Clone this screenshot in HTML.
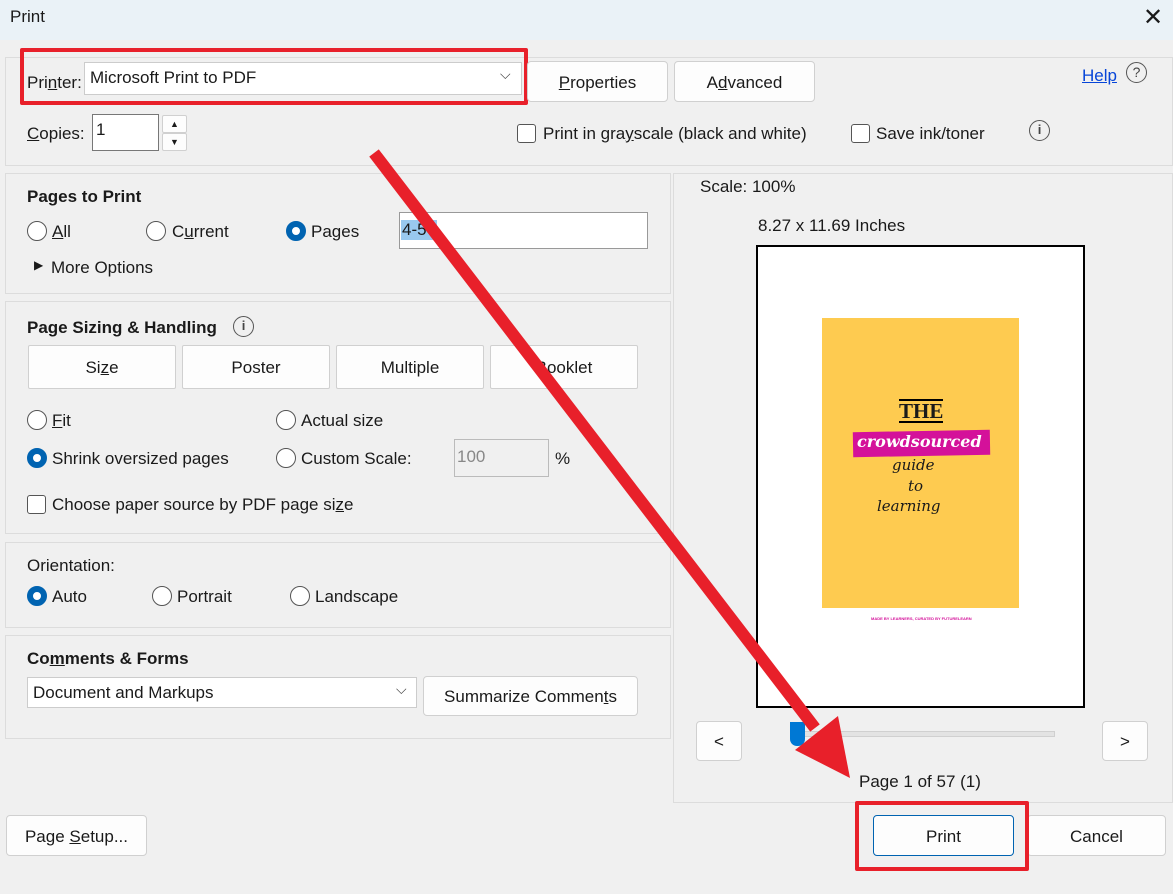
<!DOCTYPE html>
<html><head><style>
*{box-sizing:border-box;margin:0;padding:0}
body{width:1173px;height:894px;background:#f0f0f0;font-family:"Liberation Sans",sans-serif;font-size:17px;color:#1a1a1a;position:relative;overflow:hidden}
.a{position:absolute;white-space:nowrap}
.panel{position:absolute;border:1px solid #dcdcdc;background:#f0f0f0}
.btn{position:absolute;background:#fdfdfd;border:1px solid #d0d0d0;border-radius:4px;text-align:center}
.rad{position:absolute;width:20px;height:20px;border-radius:50%;border:1.5px solid #555;background:#fff}
.rad.on{border:6px solid #0063b1}
.chk{position:absolute;width:19px;height:19px;border:1.5px solid #555;border-radius:3px;background:#fff}
.inp{position:absolute;background:#fff;border:1px solid #aaa}
b{font-weight:bold}
u{text-decoration:underline}
</style></head><body>
<div class="a" style="left:0;top:0;width:1173px;height:40px;background:#eaf2f7"></div>
<div class="a" style="left:10px;top:7px;font-size:17px">Print</div>
<div class="a" style="left:1143px;top:3px;font-size:24px;font-weight:300">✕</div>

<div class="panel" style="left:5px;top:57px;width:1168px;height:109px"></div>
<div class="a" style="left:27px;top:73px">Pri<u>n</u>ter:</div>
<div class="inp" style="left:84px;top:62px;width:438px;height:33px;border-color:#ccc"></div>
<div class="a" style="left:90px;top:68px">Microsoft Print to PDF</div>
<div class="a" style="left:500px;top:66px;font-size:14px;color:#444">⌵</div>
<div class="a" style="left:20px;top:48px;width:508px;height:57px;border:4px solid #e8202a;border-radius:2px"></div>
<div class="btn" style="left:527px;top:61px;width:141px;height:41px;line-height:41px"><u>P</u>roperties</div>
<div class="btn" style="left:674px;top:61px;width:141px;height:41px;line-height:41px">A<u>d</u>vanced</div>
<div class="a" style="left:1082px;top:66px;color:#0645d8;text-decoration:underline">Help</div>
<div class="a" style="left:1126px;top:62px;width:21px;height:21px;border:1.5px solid #555;border-radius:50%;text-align:center;font-size:14px;line-height:18px;color:#444">?</div>

<div class="a" style="left:27px;top:124px"><u>C</u>opies:</div>
<div class="inp" style="left:92px;top:114px;width:67px;height:37px;border-color:#777"></div>
<div class="a" style="left:96px;top:120px">1</div>
<div class="btn" style="left:162px;top:115px;width:25px;height:18px;border-radius:2px;font-size:9px;line-height:16px">▲</div>
<div class="btn" style="left:162px;top:133px;width:25px;height:18px;border-radius:2px;font-size:9px;line-height:16px">▼</div>
<div class="chk" style="left:517px;top:124px"></div>
<div class="a" style="left:543px;top:124px">Print in gra<u>y</u>scale (black and white)</div>
<div class="chk" style="left:851px;top:124px"></div>
<div class="a" style="left:876px;top:124px">Save ink/toner</div>
<div class="a" style="left:1029px;top:120px;width:21px;height:21px;border:1.5px solid #555;border-radius:50%;text-align:center;font-size:13px;line-height:18px;color:#444;font-weight:bold">i</div>

<div class="panel" style="left:5px;top:173px;width:666px;height:121px"></div>
<div class="a" style="left:27px;top:187px"><b>Pages to Print</b></div>
<div class="rad" style="left:27px;top:221px"></div><div class="a" style="left:52px;top:222px"><u>A</u>ll</div>
<div class="rad" style="left:146px;top:221px"></div><div class="a" style="left:172px;top:222px">C<u>u</u>rrent</div>
<div class="rad on" style="left:286px;top:221px"></div><div class="a" style="left:311px;top:222px">Pa<u>g</u>es</div>
<div class="inp" style="left:399px;top:212px;width:249px;height:37px;border-color:#999"></div>
<div class="a" style="left:401px;top:220px;background:#99c9ef;padding:0 1px">4-57</div>
<div class="a" style="left:34px;top:258px;font-size:12px">▶</div>
<div class="a" style="left:51px;top:258px">More Options</div>

<div class="panel" style="left:5px;top:301px;width:666px;height:233px"></div>
<div class="a" style="left:27px;top:318px"><b>Page Sizing &amp; Handling</b></div>
<div class="a" style="left:233px;top:316px;width:21px;height:21px;border:1.5px solid #555;border-radius:50%;text-align:center;font-size:13px;line-height:18px;color:#444;font-weight:bold">i</div>
<div class="btn" style="left:28px;top:345px;width:148px;height:44px;line-height:44px;border-radius:2px">Si<u>z</u>e</div>
<div class="btn" style="left:182px;top:345px;width:148px;height:44px;line-height:44px;border-radius:2px">Poster</div>
<div class="btn" style="left:336px;top:345px;width:148px;height:44px;line-height:44px;border-radius:2px">Multiple</div>
<div class="btn" style="left:490px;top:345px;width:148px;height:44px;line-height:44px;border-radius:2px">Booklet</div>
<div class="rad" style="left:27px;top:410px"></div><div class="a" style="left:52px;top:411px"><u>F</u>it</div>
<div class="rad" style="left:276px;top:410px"></div><div class="a" style="left:301px;top:411px">Actual size</div>
<div class="rad on" style="left:27px;top:448px"></div><div class="a" style="left:52px;top:449px">Shrink oversized pages</div>
<div class="rad" style="left:276px;top:448px"></div><div class="a" style="left:301px;top:449px">Custom Scale:</div>
<div class="inp" style="left:454px;top:439px;width:95px;height:38px;background:#f0f0f0;border-color:#bbb"></div>
<div class="a" style="left:457px;top:447px;color:#888">100</div>
<div class="a" style="left:555px;top:449px">%</div>
<div class="chk" style="left:27px;top:495px"></div>
<div class="a" style="left:52px;top:495px">Choose paper source by PDF page si<u>z</u>e</div>

<div class="panel" style="left:5px;top:542px;width:666px;height:86px"></div>
<div class="a" style="left:27px;top:556px">Orientation:</div>
<div class="rad on" style="left:27px;top:586px"></div><div class="a" style="left:52px;top:587px">Auto</div>
<div class="rad" style="left:152px;top:586px"></div><div class="a" style="left:177px;top:587px">Portrait</div>
<div class="rad" style="left:290px;top:586px"></div><div class="a" style="left:315px;top:587px">Landscape</div>

<div class="panel" style="left:5px;top:635px;width:666px;height:104px"></div>
<div class="a" style="left:27px;top:649px"><b>Co<u>m</u>ments &amp; Forms</b></div>
<div class="inp" style="left:27px;top:677px;width:390px;height:31px;border-color:#ccc"></div>
<div class="a" style="left:33px;top:683px">Document and Markups</div>
<div class="a" style="left:396px;top:681px;font-size:14px;color:#444">⌵</div>
<div class="btn" style="left:423px;top:676px;width:215px;height:40px;line-height:40px">Summarize Commen<u>t</u>s</div>

<div class="panel" style="left:673px;top:173px;width:500px;height:630px"></div>
<div class="a" style="left:700px;top:177px">Scale: 100%</div>
<div class="a" style="left:758px;top:216px">8.27 x 11.69 Inches</div>
<div class="a" style="left:756px;top:245px;width:329px;height:463px;background:#fff;border:2px solid #000"></div>
<div class="a" style="left:822px;top:318px;width:197px;height:290px;background:#fecb50"></div>
<div class="a" style="left:899px;top:399px;font-family:'Liberation Serif',serif;font-weight:bold;font-size:21px;border-top:2px solid #000;border-bottom:2px solid #000;line-height:20px">THE</div>
<div class="a" style="left:853px;top:431px;width:137px;height:25px;background:#d4119a;transform:rotate(-1deg)"></div>
<div class="a" style="left:857px;top:432px;color:#fff;font-family:'DejaVu Serif',serif;font-style:italic;font-weight:bold;font-size:16px">crowdsourced</div>
<div class="a" style="left:892px;top:456px;font-family:'DejaVu Serif',serif;font-style:italic;font-size:15px">guide</div>
<div class="a" style="left:908px;top:477px;font-family:'DejaVu Serif',serif;font-style:italic;font-size:15px">to</div>
<div class="a" style="left:877px;top:497px;font-family:'DejaVu Serif',serif;font-style:italic;font-size:15px">learning</div>
<div class="a" style="left:871px;top:616px;font-size:4px;color:#d4119a;font-weight:bold">MADE BY LEARNERS, CURATED BY FUTURELEARN</div>
<div class="btn" style="left:696px;top:721px;width:46px;height:40px;line-height:40px">&lt;</div>
<div class="btn" style="left:1102px;top:721px;width:46px;height:40px;line-height:40px">&gt;</div>
<div class="a" style="left:790px;top:731px;width:265px;height:6px;background:#e3e3e3;border:1px solid #d0d0d0"></div>
<div class="a" style="left:790px;top:722px;width:15px;height:24px;background:#0078d4;border-radius:0 0 7px 7px"></div>
<div class="a" style="left:859px;top:772px">Page 1 of 57 (1)</div>

<div class="btn" style="left:6px;top:815px;width:141px;height:41px;line-height:41px">Page <u>S</u>etup...</div>
<div class="btn" style="left:873px;top:815px;width:141px;height:41px;line-height:41px;border:1.5px solid #0063b1">Print</div>
<div class="btn" style="left:1027px;top:815px;width:139px;height:41px;line-height:41px">Cancel</div>
<div class="a" style="left:855px;top:801px;width:174px;height:70px;border:4px solid #e8202a;border-radius:2px"></div>

<svg class="a" style="left:0;top:0" width="1173" height="894">
<line x1="374" y1="153" x2="815" y2="728" stroke="#e8202a" stroke-width="12"/>
<polygon points="795,750 838,716 850,778" fill="#e8202a"/>
</svg>
</body></html>
